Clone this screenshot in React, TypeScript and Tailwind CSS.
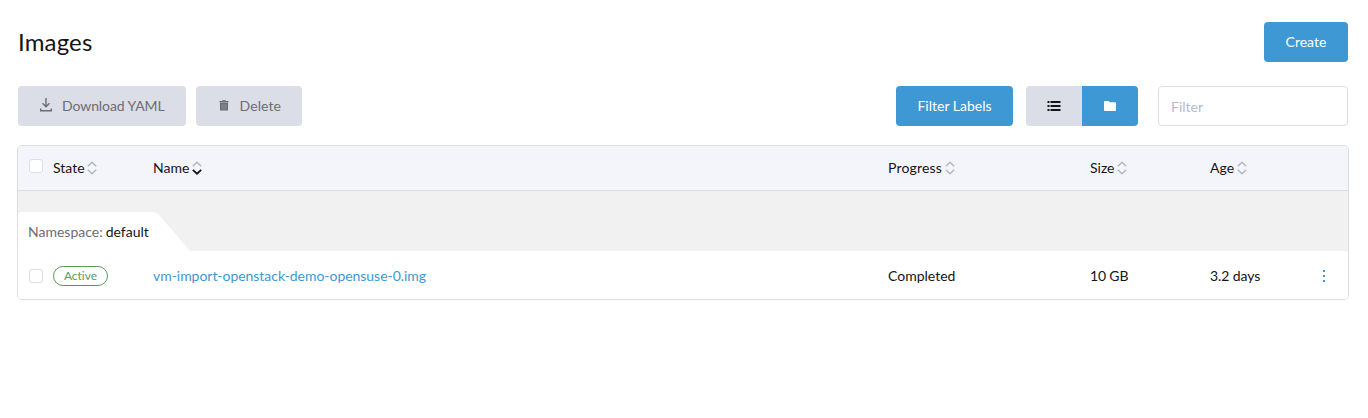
import type { ReactNode } from "react";

function SortIcon({ active = false }: { active?: boolean }) {
  return (
    <svg width="10" height="14" viewBox="0 0 10 14" fill="none" className="ml-[2.6px] shrink-0">
      <path d="M.8 5.2 5 1.3l4.2 3.9" stroke="#b4b5ba" strokeWidth="1.5" />
      <path
        d="M.8 8.8 5 12.7l4.2-3.9"
        stroke={active ? "#141419" : "#b4b5ba"}
        strokeWidth={active ? 1.8 : 1.5}
      />
    </svg>
  );
}

function DownloadIcon() {
  return (
    <svg width="12" height="14" viewBox="0 0 12 14" fill="none" stroke="#6c6c76" strokeWidth="1.4" className="-mt-[2px]">
      <path d="M6 0v9M2.5 5.3 6 8.8l3.5-3.5M.7 10.5v2.3h10.6v-2.3" />
    </svg>
  );
}

function TrashIcon() {
  return (
    <svg width="10" height="12" viewBox="0 0 10 12" fill="#6c6c76" className="-mt-px">
      <path d="M3 .2h4V1h2.5v1.4H.5V1H3z" />
      <path d="M1 2.9h8v7.6H1z" />
      <path d="M3.2 4v5.4M5 4v5.4M6.8 4v5.4" stroke="#a4a5ae" strokeWidth=".6" />
    </svg>
  );
}

function ListIcon() {
  return (
    <svg width="14" height="12" viewBox="0 0 14 12" fill="#141419">
      <path d="M.5 1h2v2h-2zM3.5 1h10v2h-10zM.5 5h2v2h-2zM3.5 5h10v2h-10zM.5 9h2v2h-2zM3.5 9h10v2h-10z" />
    </svg>
  );
}

function FolderIcon() {
  return (
    <svg width="12" height="10" viewBox="0 0 12 10" fill="#fff">
      <path d="M1 0h3.6l1.2 1.3H11a1 1 0 0 1 1 1V9a1 1 0 0 1-1 1H1a1 1 0 0 1-1-1V1a1 1 0 0 1 1-1z" />
    </svg>
  );
}

function MoreIcon() {
  return (
    <svg width="4" height="14" viewBox="0 0 4 14" fill="#3d98d3">
      <path d="M1 1h2v2H1zM1 6h2v2H1zM1 11h2v2H1z" />
    </svg>
  );
}

function Checkbox() {
  return <span className="block size-[14px] rounded-[3px] border border-[#dcdee7] bg-white" />;
}

function Heading({ children, active }: { children: ReactNode; active?: boolean }) {
  return (
    <span className="flex items-center">
      {children}
      <SortIcon active={active} />
    </span>
  );
}

const columns = "grid grid-cols-[35px_100px_735px_202px_120px_1fr] items-center";

export default function App() {
  return (
    <main className="h-[418px] bg-white pt-[22px] pr-5 pl-[18px] font-['Lato',sans-serif] text-sm text-[#141419] [font-variant-ligatures:none]">
      <header className="flex h-10 items-center justify-between">
        <h1 className="text-2xl tracking-[0.15px]">Images</h1>
        <button className="h-10 w-[84px] rounded-[4px] bg-[#3d98d3] text-white">Create</button>
      </header>

      <div className="mt-6 flex h-10">
        <button className="flex w-[168px] items-center rounded-[4px] bg-[#dcdee7] pl-[22px] text-[#6c6c76]">
          <DownloadIcon />
          <span className="ml-[10px] tracking-[-0.08px]">Download YAML</span>
        </button>
        <button className="ml-[10px] flex w-[106px] items-center rounded-[4px] bg-[#dcdee7] pl-[23px] text-[#6c6c76]">
          <TrashIcon />
          <span className="ml-[10.5px] tracking-[0.1px]">Delete</span>
        </button>
        <button className="ml-auto w-[117px] rounded-[4px] bg-[#3d98d3] text-white">
          Filter Labels
        </button>
        <div className="ml-[13px] flex overflow-hidden rounded-[4px]">
          <button className="flex w-14 items-center justify-center bg-[#dcdee7]">
            <ListIcon />
          </button>
          <button className="flex w-14 items-center justify-center bg-[#3d98d3]">
            <FolderIcon />
          </button>
        </div>
        <input
          placeholder="Filter"
          className="ml-5 w-[190px] rounded-[4px] border border-[#dcdee7] px-3 pt-[2px] placeholder:text-[#b6b9d0]"
        />
      </div>

      <section className="mt-[19px] -mr-px -ml-px h-[155px] overflow-hidden rounded-[5px] border border-[#dcdee7]">
        <div className={`${columns} h-[45px] border-b border-[#dcdee7] bg-[#f4f5fa]`}>
          <span className="-mt-1 pl-[11px]">
            <Checkbox />
          </span>
          <Heading>State</Heading>
          <Heading active>Name</Heading>
          <Heading>
            <span className="tracking-[0.17px]">Progress</span>
          </Heading>
          <Heading>Size</Heading>
          <Heading>Age</Heading>
        </div>
        <div className="flex h-[60px] items-end bg-[#f1f1f1]">
          <div className="flex h-[39px] w-[173px] items-center rounded-tl-[4px] bg-white pl-[10px] [clip-path:polygon(0_0,136px_0,139px_1px,141px_3px,172px_39px,0_39px)]">
            <span className="text-[#6c6c76]">Namespace:</span>
            <span className="ml-[3px]">default</span>
          </div>
        </div>
        <div className={`${columns} h-12 bg-white pt-[2px]`}>
          <span className="pl-[11px]">
            <Checkbox />
          </span>
          <span className="flex h-5 w-[55px] items-center justify-center rounded-full border border-[#5d995d] text-xs text-[#5d995d]">
            Active
          </span>
          <a className="tracking-[-0.04px] text-[#3d98d3]">vm-import-openstack-demo-opensuse-0.img</a>
          <span>Completed</span>
          <span className="tracking-[-0.15px]">10 GB</span>
          <span className="flex items-center justify-between pr-[22px]">
            <span className="tracking-[-0.1px]">3.2 days</span>
            <MoreIcon />
          </span>
        </div>
      </section>
    </main>
  );
}
